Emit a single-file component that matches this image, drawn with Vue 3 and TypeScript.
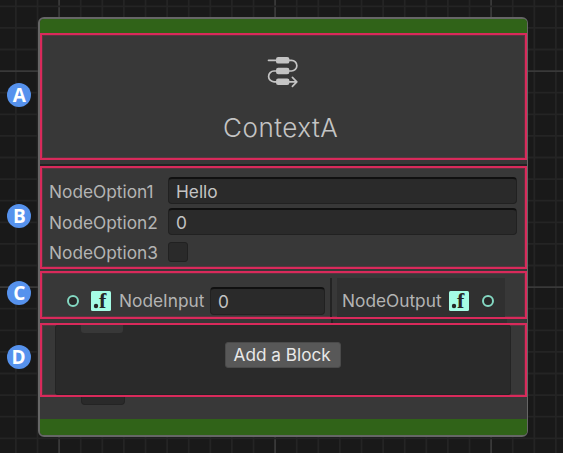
<script setup lang="ts">
import { ref } from 'vue'

interface GridLine { pos: number; major: boolean }

const step = 21.6
const makeLines = (start: number, majorAt: number): GridLine[] =>
  Array.from({ length: 27 }, (_, i) => ({ pos: start + i * step, major: i % 10 === majorAt }))

const columns = makeLines(15.9, 2)
const rows = makeLines(6.3, 3)

const option1 = ref('Hello')
const option2 = ref('0')
const inputValue = ref('0')
</script>

<template>
  <main class="graph">
    <svg class="grid" width="563" height="453" aria-hidden="true">
      <line v-for="l in columns" :key="'c' + l.pos" :x1="l.pos" :x2="l.pos" y1="0" y2="453" :class="{ major: l.major }" />
      <line v-for="l in rows" :key="'r' + l.pos" x1="0" x2="563" :y1="l.pos" :y2="l.pos" :class="{ major: l.major }" />
    </svg>

    <article class="node">
      <div class="cap top"></div>

      <section class="zone header">
        <span class="badge a">A</span>
        <svg class="flow-icon" width="34" height="34" viewBox="0 0 34 34" fill="none" stroke="#c4c4c4" stroke-width="1.7" stroke-linecap="round" stroke-linejoin="round">
          <path d="M2.5 6.3H25.5a5.35 5.35 0 0 1 0 10.7H8a5.4 5.4 0 0 0 0 10.8H30.5M26.4 23.4l4.4 4.4-4.4 4.5" />
          <g fill="#c4c4c4" stroke="none">
            <rect x="10" y="3" width="13.4" height="6.6" rx="2.2" />
            <rect x="10" y="13.8" width="13.4" height="6.4" rx="2.2" />
            <rect x="10" y="24.6" width="13.4" height="6.4" rx="2.2" />
          </g>
        </svg>
        <h1>ContextA</h1>
      </section>

      <div class="divider"></div>

      <section class="zone options">
        <span class="badge b">B</span>
        <label>NodeOption1</label><div class="field">{{ option1 }}</div>
        <label>NodeOption2</label><div class="field">{{ option2 }}</div>
        <label>NodeOption3</label><div class="check"></div>
      </section>

      <section class="zone ports">
        <span class="badge c">C</span>
        <div class="port input">
          <i class="dot"></i>
          <svg class="type" width="20" height="20" viewBox="0 0 20 20"><rect width="20" height="20" rx="1.5" fill="#a5fce5" /><circle cx="5" cy="15" r="2.2" fill="#252525" /><text x="8" y="17">f</text></svg>
          <span class="in-label">NodeInput</span>
          <div class="field">{{ inputValue }}</div>
        </div>
        <div class="port output">
          <span class="out-label">NodeOutput</span>
          <svg class="type" width="20" height="20" viewBox="0 0 20 20"><rect width="20" height="20" rx="1.5" fill="#a5fce5" /><circle cx="5" cy="15" r="2.2" fill="#252525" /><text x="8" y="17">f</text></svg>
          <i class="dot"></i>
        </div>
      </section>

      <div class="seam"><span></span></div>

      <section class="zone blocks">
        <span class="badge d">D</span>
        <div class="well">
          <span class="notch"></span>
          <button type="button">Add a Block</button>
        </div>
      </section>

      <div class="footer"><span class="tab"></span></div>
      <div class="cap bottom"></div>
    </article>
  </main>
</template>

<style>
body { margin: 0; background: #191919; }
</style>

<style scoped>
* { box-sizing: border-box; }
.graph {
  position: relative;
  width: 563px;
  height: 453px;
  padding: 17px 0 0 38px;
  overflow: hidden;
  background: #191919;
  font-family: Inter, "Liberation Sans", sans-serif;
  color: #c4c4c4;
}
.grid { position: absolute; inset: 0; }
.grid line { stroke: #242424; stroke-width: 1.8; }
.grid line.major { stroke: #393939; }
.node {
  position: relative;
  display: flex;
  flex-direction: column;
  width: 490.4px;
  height: 420px;
  border: 2px solid #666;
  border-right-width: 1.4px;
  border-radius: 6px;
  background: #383838;
}
.cap { flex: none; background: #306318; }
.top { height: 14.3px; border-radius: 4px 4px 0 0; }
.bottom { height: 15.7px; border-radius: 0 0 4px 4px; }
.zone {
  position: relative;
  flex: none;
  border: 2px solid #d92a5b;
  box-shadow: inset 0 0 0 1px rgba(217, 42, 91, 0.22);
}
.header {
  height: 126.7px;
  display: flex;
  flex-direction: column;
  align-items: center;
  padding-top: 18.7px;
}
.flow-icon { flex: none; margin-right: 2px; }
h1 {
  margin: 21px 6px 0 0;
  font-size: 26px;
  line-height: 37px;
  font-weight: 300;
  letter-spacing: 0.5px;
}
.divider { flex: none; height: 6px; border-bottom: 2px solid #232323; }
.options {
  height: 103px;
  display: grid;
  grid-template-columns: 119px 349px;
  grid-template-rows: 27px 27px 21px;
  row-gap: 4px;
  padding: 9px 0 0 7px;
  font-size: 17.3px;
}
.options label { line-height: 30px; color: #b4b4b4; }
.options label:last-of-type { line-height: 28px; }
.field {
  border: 1px solid #212121;
  border-top: 2px solid #101010;
  border-radius: 4px;
  background: #2a2a2a;
  padding-left: 7px;
  font-size: 17.3px;
  line-height: 26px;
  height: 27px;
}
.check {
  width: 20px;
  height: 20px;
  margin-top: 3px;
  border: 1px solid #212121;
  border-radius: 3px;
  background: #2a2a2a;
}
.ports {
  height: 48px;
  margin-top: 2px;
  display: flex;
  padding: 5px 0 0 8px;
  font-size: 17.3px;
  color: #b4b4b4;
}
.port { display: flex; align-items: center; height: 39px; padding-top: 7px; }
.input { width: 282px; padding-left: 17px; border-right: 2px solid #232323; }
.input .field { width: 115px; height: 28px; margin-left: 6px; color: #c4c4c4; }
.output { width: 168px; margin-left: 5px; padding-left: 5px; background: #303030; }
.dot { flex: none; width: 12px; height: 12px; border: 2px solid #84d8c2; border-radius: 50%; background: #282828; }
.type { flex: none; overflow: visible; }
.type text { font: bold 22px "Liberation Serif", serif; fill: #252525; }
.input .type { margin: 0 8px 0 12px; }
.output .type { margin: 0 13px 0 8px; }
.in-label, .out-label { line-height: 22px; padding-top: 1px; }
.in-label { width: 85px; }
.out-label { width: 99px; }
.seam { flex: none; height: 4px; display: flex; padding-left: 291px; }
.seam span { width: 176px; height: 4px; background: #303030; border-left: 2px solid #232323; }
.blocks { height: 74px; padding: 0 14px 0 13px; }
.well {
  height: 70px;
  display: flex;
  flex-direction: column;
  align-items: center;
  border: 1px solid #242424;
  border-top: 0;
  border-radius: 3px;
  background: #2a2a2a;
}
.notch { width: 42px; height: 8px; align-self: flex-start; margin-left: 25px; border-radius: 0 0 3px 3px; background: #383838; }
button {
  width: 116px;
  height: 26px;
  margin: 9px 0 0 0;
  padding: 0 2px 0 0;
  border: 1px solid #4a4a4a;
  border-radius: 3px;
  background: #585858;
  color: #e8e8e8;
  font: 400 17.2px/23px Inter, "Liberation Sans", sans-serif;
}
.footer { flex: none; height: 22.3px; padding-left: 41px; }
.tab { display: block; width: 44px; height: 8px; border: 1px solid #242424; border-top: 0; border-radius: 0 0 4px 4px; background: #2a2a2a; }
.badge {
  position: absolute;
  left: -34.6px;
  width: 24px;
  height: 24px;
  border-radius: 50%;
  background: #5692ed;
  color: #fff;
  font: 700 19px/24px "Open Sans", sans-serif;
  text-align: center;
}
.a { top: 47.7px; }
.b { top: 36px; }
.c { top: 8px; }
.d { top: 20.5px; left: -35.4px; }
</style>
